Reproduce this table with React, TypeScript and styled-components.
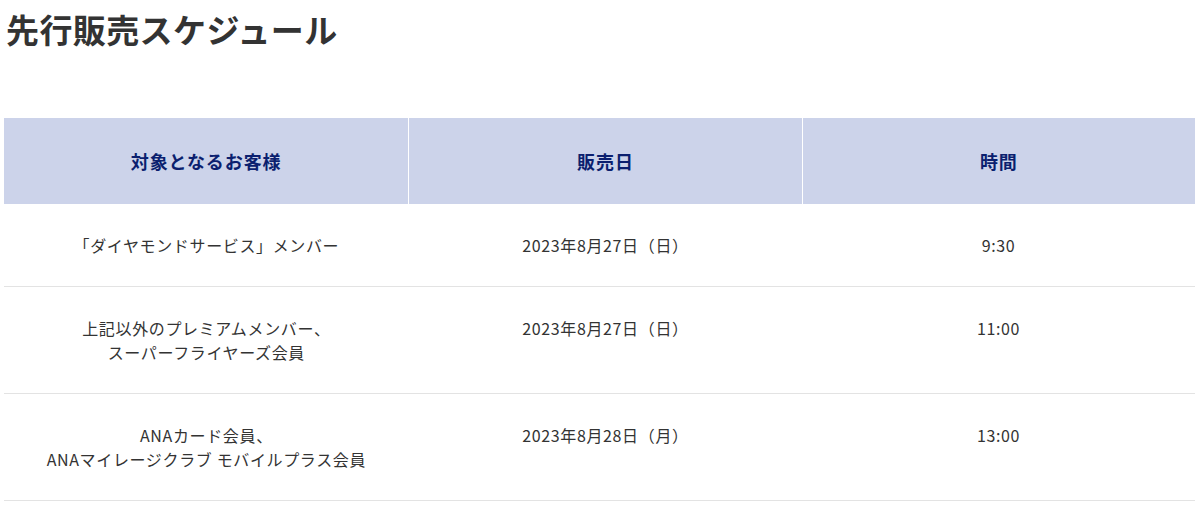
import React from 'react';
import styled, { createGlobalStyle } from 'styled-components';

const GlobalStyle = createGlobalStyle`
  body {
    margin: 0;
    background: #ffffff;
    font-family: "Noto Sans CJK JP", "Noto Sans", sans-serif;
    color: #333333;
  }
`;

const Page = styled.div`
  padding: 6px 5px 0 4px;
`;

const Title = styled.h2`
  margin: 0 0 0 2px;
  font-size: 33px;
  line-height: 46px;
  font-weight: 700;
  letter-spacing: 0.012em;
  color: #333333;
`;

const Table = styled.table`
  width: 100%;
  margin-top: 66px;
  border-collapse: collapse;
  table-layout: fixed;
`;

const HeadCell = styled.th<{ width: string }>`
  width: ${({ width }) => width};
  height: 86px;
  padding: 0;
  background: #ccd3ea;
  color: #0b1f6f;
  font-size: 18px;
  font-weight: 700;
  letter-spacing: 0.05em;
  text-align: center;
  vertical-align: middle;
  border-left: 1px solid #ffffff;

  &:first-child {
    border-left: none;
  }
`;

const Row = styled.tr`
  border-bottom: 1px solid #e3e3e3;
`;

const Cell = styled.td`
  padding: 29px 10px;
  font-size: 16px;
  line-height: 24px;
  letter-spacing: 0.04em;
  text-align: center;
  vertical-align: top;
  color: #333333;
`;

interface Schedule {
  target: string[];
  date: string;
  time: string;
}

const schedules: Schedule[] = [
  { target: ['「ダイヤモンドサービス」メンバー'], date: '2023年8月27日（日）', time: '9:30' },
  {
    target: ['上記以外のプレミアムメンバー、', 'スーパーフライヤーズ会員'],
    date: '2023年8月27日（日）',
    time: '11:00',
  },
  {
    target: ['ANAカード会員、', 'ANAマイレージクラブ モバイルプラス会員'],
    date: '2023年8月28日（月）',
    time: '13:00',
  },
];

export default function App() {
  return (
    <Page>
      <GlobalStyle />
      <Title>先行販売スケジュール</Title>
      <Table>
        <thead>
          <tr>
            <HeadCell width="34%">対象となるお客様</HeadCell>
            <HeadCell width="33%">販売日</HeadCell>
            <HeadCell width="33%">時間</HeadCell>
          </tr>
        </thead>
        <tbody>
          {schedules.map((s) => (
            <Row key={s.time}>
              <Cell>
                {s.target.map((line, i) => (
                  <React.Fragment key={i}>
                    {i > 0 && <br />}
                    {line}
                  </React.Fragment>
                ))}
              </Cell>
              <Cell>{s.date}</Cell>
              <Cell>{s.time}</Cell>
            </Row>
          ))}
        </tbody>
      </Table>
    </Page>
  );
}
